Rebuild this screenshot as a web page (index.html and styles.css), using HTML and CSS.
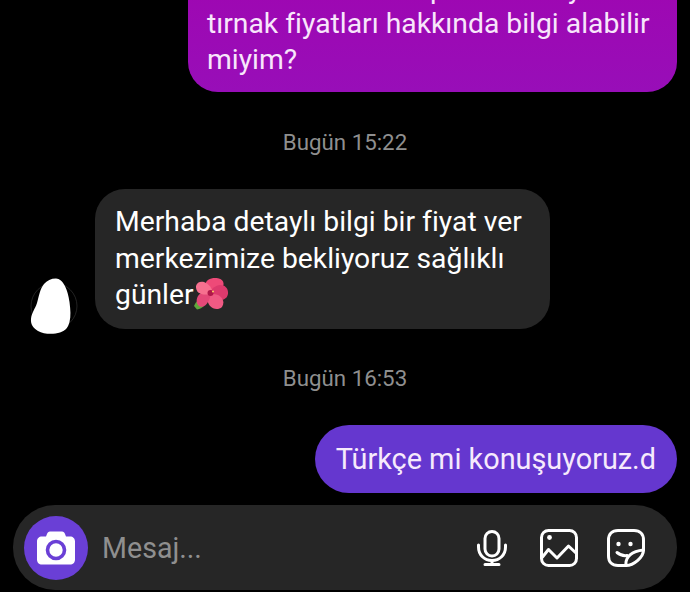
FILE: index.html
```html
<!DOCTYPE html>
<html lang="tr">
<head>
    <meta charset="UTF-8">
    <meta name="viewport" content="width=device-width, initial-scale=1.0">
    <title>Mesajlar</title>
    <link rel="stylesheet" href="styles.css">
</head>
<body>

    <div class="chat">
        <div class="bubble bubble-first">
            Merhabalar kalıcı protez ve oyalı<br>
            tırnak fiyatları hakkında bilgi alabilir<br>
            miyim?
        </div>

        <div class="time time-first">Bugün 15:22</div>

        <div class="incoming">
            <svg class="avatar" viewBox="0 0 48 57">
                <circle cx="24" cy="28" r="23" fill="none" stroke="#3a3a3a" stroke-width="0.6"/>
                <path d="M26 0.500 C33 0.500 38 12 39.500 24 C40.500 32 41 38 39.500 44 C38 50 35 53 30 54.500 C24 56.500 14 56.500 8 53 C3 50 0.500 46 1 41 C1.500 35 5 31 7 25 C9 18 10 11 14 6 C17 2.500 21 0.500 26 0.500 Z" fill="#fff"/>
            </svg>
            <div class="bubble bubble-grey">
                Merhaba detaylı bilgi bir fiyat ver<br>
                merkezimize bekliyoruz sağlıklı<br>
                günler<svg class="flower" viewBox="0 0 34 32">
                    <path d="M0 28 C2 23 6 20 11 21 C12 26 9 31 3 31.500 Z" fill="#5fa83c"/>
                    <path d="M13 13 C8 3 16 -1 24 0.300 C32 1.500 32 11 20 16 Z" fill="#ee4a78"/>
                    <path d="M18 11 C25 4 33.500 7 34 14 C34.500 22 26 25 18 18 Z" fill="#dd3a6d"/>
                    <path d="M17 16 C27 15 32 23 28 29 C23 33.500 13 31 13 18 Z" fill="#f05a84"/>
                    <path d="M17 16 C15 26 9 31 5 28 C0 24 3 13 14 13 Z" fill="#e44878"/>
                    <path d="M16 16 C8 18 1.500 15 2 8 C3.500 1.500 14 2 18 12 Z" fill="#f6708f"/>
                    <circle cx="16.500" cy="15" r="3" fill="#b0184a"/>
                    <circle cx="19" cy="13.500" r="1" fill="#ffd166"/>
                </svg>
            </div>
        </div>

        <div class="time time-second">Bugün 16:53</div>

        <div class="bubble bubble-violet">Türkçe mi konuşuyoruz.d</div>

        <div class="composer">
            <div class="camera">
                <svg viewBox="0 0 38 34" width="38" height="35">
                    <path d="M13 1 H25 C26.500 1 27.500 2 28 3.500 L29 6 H33 C36 6 38 8 38 11 V29 C38 32 36 34 33 34 H5 C2 34 0 32 0 29 V11 C0 8 2 6 5 6 H9 L10 3.500 C10.500 2 11.500 1 13 1 Z" fill="#fff"/>
                    <circle cx="19" cy="19.500" r="8.500" fill="none" stroke="#6a3fd6" stroke-width="3.600"/>
                </svg>
            </div>
            <span class="placeholder">Mesaj...</span>
            <div class="tools">
                <svg class="tool-mic" viewBox="0 0 30 36" fill="none" stroke="#fff" stroke-width="3" stroke-linecap="round" stroke-linejoin="round">
                    <rect x="8" y="1.500" width="14" height="24.500" rx="7"/>
                    <path d="M1.500 15 V17 C1.500 25 7.500 30.500 15 30.500 C22.500 30.500 28.500 25 28.500 17 V15"/>
                    <path d="M15 30.500 V34.500 M8 34.500 H22"/>
                </svg>
                <svg class="tool-image" viewBox="0 0 38 38" fill="none" stroke="#fff" stroke-width="3" stroke-linecap="round" stroke-linejoin="round">
                    <rect x="1.500" y="1.500" width="35" height="35" rx="7"/>
                    <path d="M2.500 28 L8.500 20.500 L17 29 L28.500 17 L36.500 24.500"/>
                    <circle cx="9.500" cy="8.500" r="2.400" fill="#fff" stroke="none"/>
                </svg>
                <svg class="tool-sticker" viewBox="0 0 38 38" fill="none" stroke="#fff" stroke-width="3" stroke-linecap="round" stroke-linejoin="round">
                    <path d="M19 36.500 H11 C5 36.500 1.500 33 1.500 27 V11 C1.500 5 5 1.500 11 1.500 H27 C33 1.500 36.500 5 36.500 11 V21 C36.500 28 27 36.500 19 36.500 Z"/>
                    <path d="M19 36.500 C18 28 25 22 36.500 21"/>
                    <path d="M10 23.500 C13 26 16.500 27 20 26.500"/>
                    <circle cx="11.500" cy="15" r="2.200" fill="#fff" stroke="none"/>
                    <circle cx="23.500" cy="15" r="2.200" fill="#fff" stroke="none"/>
                </svg>
            </div>
        </div>
    </div>

</body>
</html>
```

FILE: styles.css
```css
* {
    box-sizing: border-box;
}
body {
    margin: 0;
    background-color: #000;
    font-family: Roboto, "Liberation Sans", sans-serif;
    color: #fff;
}
.chat {
    height: 592px;
    overflow: hidden;
    display: flex;
    flex-direction: column;
    justify-content: flex-end;
    padding: 0 13px 2px;
}
.bubble {
    flex-shrink: 0;
    font-size: 28.3px;
    line-height: 36.5px;
    border-radius: 30px;
}
.bubble-first {
    align-self: flex-end;
    width: 489px;
    padding: 16px 19px 15px;
    line-height: 35.5px;
    background: linear-gradient(#a005b0, #980eb8);
    color: #f8e6fb;
}
.time {
    flex-shrink: 0;
    text-align: center;
    font-size: 22.3px;
    line-height: 24px;
    color: #8f8f8f;
}
.time-first {
    margin: 38px 0 35px;
}
.time-second {
    margin: 37px 0 35px;
}
.incoming {
    flex-shrink: 0;
    display: flex;
    align-items: flex-end;
    margin-left: 17px;
}
.avatar {
    width: 48px;
    height: 57px;
    margin: 0 17px -6px 0;
}
.bubble-grey {
    width: 455px;
    height: 140px;
    padding: 15px 20px 0;
    background-color: #262626;
}
.flower {
    width: 34px;
    height: 32px;
    vertical-align: -6px;
}
.bubble-violet {
    align-self: flex-end;
    height: 68px;
    padding: 16px 21px;
    border-radius: 34px;
    font-size: 28.85px;
    background-color: #6537cf;
    color: #f6eafc;
}
.composer {
    flex-shrink: 0;
    height: 85px;
    margin: 12px 0 0;
    padding: 0 32px 0 11px;
    display: flex;
    align-items: center;
    border-radius: 42px;
    background-color: #262626;
}
.camera {
    width: 64px;
    height: 64px;
    border-radius: 50%;
    background-color: #6a3fd6;
    display: flex;
    align-items: center;
    justify-content: center;
}
.placeholder {
    margin-left: 14px;
    font-size: 28.6px;
    color: #8f8f8f;
}
.tools {
    margin-left: auto;
    display: flex;
    align-items: center;
}
.tool-mic {
    width: 30px;
    height: 36px;
    margin-right: 33px;
}
.tool-image {
    width: 38px;
    height: 38px;
    margin-right: 29px;
}
.tool-sticker {
    width: 38px;
    height: 38px;
}
```
